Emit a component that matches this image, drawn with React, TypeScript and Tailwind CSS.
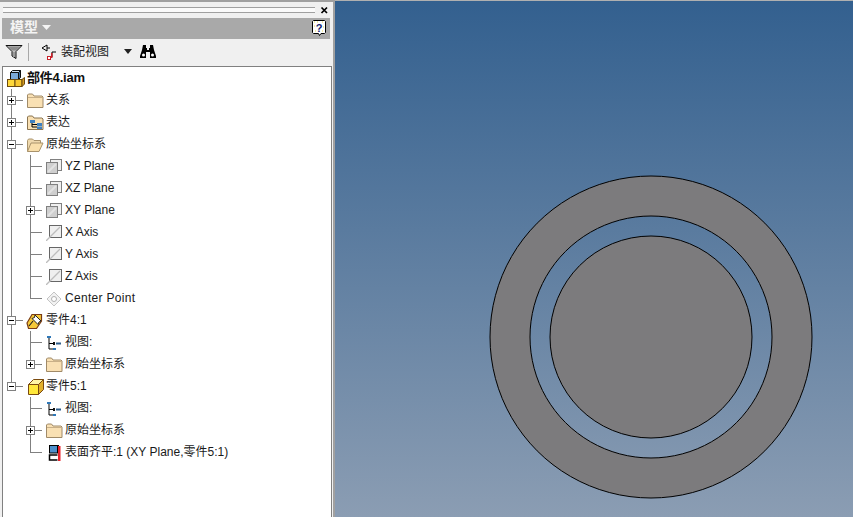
import React from "react";

const cjk = "font-['Liberation_Sans','Noto_Sans_CJK_SC',sans-serif]";

function Box({ t, minus }: { t: number; minus?: boolean }) {
  return (
    <svg width="11" height="11" className="absolute" style={{ left: t, top: 6 }}>
      <rect x="1.500" y="1.500" width="8" height="8" fill="#fff" stroke="#808080" />
      <path d="M3 5.500h5" stroke="#000" />
      {!minus && <path d="M5.500 3v5" stroke="#000" />}
    </svg>
  );
}

function Folder({ open }: { open?: boolean }) {
  return open ? (
    <svg width="18" height="16" viewBox="0 0 18 16">
      <path d="M1.500 14.500V3.500l1-1.500h4l1.500 1.500h6.500v2.500" fill="#efd9ad" stroke="#a9936c" />
      <path d="M1.500 14.500l3.500-8.500h12l-4 8.500z" fill="#f9dfab" stroke="#a9936c" />
    </svg>
  ) : (
    <svg width="18" height="16" viewBox="0 0 18 16">
      <path d="M1.500 14.500V2l1-1h4l1.500 2h8l1 1v10.500z" fill="#f9e0b3" stroke="#a08a68" />
      <path d="M2 4.500h15" stroke="#c9b088" />
    </svg>
  );
}

function RepFolder() {
  return (
    <svg width="18" height="16" viewBox="0 0 18 16">
      <path d="M1.500 14.500V2l1-1h4l1.500 2h8l1 1v10.500z" fill="#f9e0b3" stroke="#8a7450" />
      <path d="M6 7v5h5M6 9.500h5" stroke="#000" fill="none" />
      <rect x="4" y="5" width="5" height="3" fill="#3f80c0" />
      <rect x="11" y="8" width="5" height="3" fill="#3f80c0" />
      <rect x="11" y="11.500" width="5" height="2.500" fill="#3f80c0" />
    </svg>
  );
}

function PlaneIcon() {
  return (
    <svg width="16" height="16" viewBox="0 0 16 16">
      <rect x="4.500" y="0.500" width="11" height="11" fill="#f0f0f0" stroke="#808080" />
      <rect x="0.500" y="3.500" width="11" height="11" fill="#cfcfcf" stroke="#808080" />
      <path d="M2 13L10 5" stroke="#e2e2e2" strokeWidth="2" />
    </svg>
  );
}

function AxisIcon() {
  return (
    <svg width="16" height="16" viewBox="0 0 16 16">
      <rect x="3.500" y="0.500" width="12" height="12" fill="#efefef" stroke="#666" />
      <path d="M0 16L14 2" stroke="#bdbdbd" strokeWidth="1.300" />
    </svg>
  );
}

function PointIcon() {
  return (
    <svg width="16" height="16" viewBox="0 0 16 16">
      <path d="M8 1L15 8L8 15L1 8Z" fill="#f2f2f2" stroke="#c4c4c4" />
      <circle cx="8" cy="8" r="2.500" fill="#fff" stroke="#b0b0b0" />
    </svg>
  );
}

function ViewIcon() {
  return (
    <svg width="16" height="16" viewBox="0 0 16 16">
      <path d="M3 2v12h4M3 8.500h4" stroke="#000" fill="none" />
      <rect x="1" y="1" width="4" height="2" fill="#2f78b8" />
      <rect x="7" y="7" width="2" height="3" fill="#111" />
      <rect x="10" y="7.500" width="5" height="2" fill="#2f5f8c" />
      <rect x="7" y="13" width="3" height="2" fill="#2f78b8" />
    </svg>
  );
}

function MateIcon() {
  return (
    <svg width="13" height="16" viewBox="0 0 13 16">
      <rect x="1.500" y="0.500" width="8" height="7.500" fill="#4d90cc" stroke="#000" />
      <path d="M9.500 10H1.500v5h8" fill="#fff" stroke="#000" strokeWidth="1.500" />
      <path d="M10 0.500h1" stroke="#000" />
      <rect x="10" y="1" width="2.500" height="15" fill="#e8202a" />
    </svg>
  );
}

function PartPin() {
  return (
    <svg width="18" height="18" viewBox="0 0 18 18">
      <path d="M1 11L6 2.500h9.500V9L10.500 16.500H2.500z" fill="#f6c93a" stroke="#7a3c14" strokeWidth="1.200" />
      <path d="M9 3l6 6-2 1-1 2.500-6-6 2.500-1z" fill="#fff" stroke="#222" />
      <path d="M7 9l-4 5" stroke="#222" strokeWidth="1.200" />
    </svg>
  );
}

function PartCube() {
  return (
    <svg width="17" height="17" viewBox="0 0 17 17">
      <path d="M1.500 6.500h10v10h-10z" fill="#ffe83a" stroke="#7a4a10" />
      <path d="M1.500 6.500L6.500 1.500h10l-5 5z" fill="#fff5a5" stroke="#7a4a10" />
      <path d="M11.500 6.500l5-5v10l-5 5z" fill="#e2b02a" stroke="#7a4a10" />
    </svg>
  );
}

function AssemblyIcon() {
  return (
    <svg width="18" height="17" viewBox="0 0 18 17">
      <rect x="3.500" y="2.500" width="8" height="7" fill="#7ba9d8" stroke="#111" />
      <path d="M3.500 2.500l2-2h8l-2 2z" fill="#cfe1f3" stroke="#111" />
      <path d="M11.500 2.500l2-2v7l-2 2z" fill="#3a6a9c" stroke="#111" />
      <rect x="0.500" y="9.500" width="7.500" height="7" fill="#ffd83a" stroke="#6b4a10" />
      <rect x="8" y="9.500" width="7" height="7" fill="#f8c830" stroke="#6b4a10" />
      <path d="M15 9.500l2.500-2v6.500L15 16.500z" fill="#d69c20" stroke="#6b4a10" />
    </svg>
  );
}

type Row = { level: 0 | 1; icon: React.ReactNode; label: string; box?: "plus" | "minus"; wide?: boolean };

const rows: Row[] = [
  { level: 0, box: "plus", icon: <Folder />, label: "关系" },
  { level: 0, box: "plus", icon: <RepFolder />, label: "表达" },
  { level: 0, box: "minus", icon: <Folder open />, label: "原始坐标系" },
  { level: 1, icon: <PlaneIcon />, label: "YZ Plane" },
  { level: 1, icon: <PlaneIcon />, label: "XZ Plane" },
  { level: 1, box: "plus", icon: <PlaneIcon />, label: "XY Plane" },
  { level: 1, icon: <AxisIcon />, label: "X Axis" },
  { level: 1, icon: <AxisIcon />, label: "Y Axis" },
  { level: 1, icon: <AxisIcon />, label: "Z Axis" },
  { level: 1, icon: <PointIcon />, label: "Center Point", wide: true },
  { level: 0, box: "minus", icon: <PartPin />, label: "零件4:1" },
  { level: 1, icon: <ViewIcon />, label: "视图:" },
  { level: 1, box: "plus", icon: <Folder />, label: "原始坐标系" },
  { level: 0, box: "minus", icon: <PartCube />, label: "零件5:1" },
  { level: 1, icon: <ViewIcon />, label: "视图:" },
  { level: 1, box: "plus", icon: <Folder />, label: "原始坐标系" },
  { level: 1, icon: <MateIcon />, label: "表面齐平:1 (XY Plane,零件5:1)" },
];

function TreeRow({ row, index }: { row: Row; index: number }) {
  const x = row.level === 0 ? 8 : 27;
  const iconLeft = row.level === 0 ? 23 : 42;
  const lastOfLevel1 = index === 9 || index === 12 || index === 16;
  return (
    <div className="relative h-[22px]">
      {index < 13 && <div className="absolute left-[8px] top-0 bottom-0 w-px bg-[#808080]" />}
      {index === 13 && <div className="absolute left-[8px] top-0 h-[11px] w-px bg-[#808080]" />}
      {row.level === 1 && (
        <div
          className={
            lastOfLevel1
              ? "absolute left-[27px] top-0 h-[11px] w-px bg-[#808080]"
              : "absolute left-[27px] top-0 bottom-0 w-px bg-[#808080]"
          }
        />
      )}
      <div className="absolute top-[11px] h-px w-[12px] bg-[#808080]" style={{ left: x }} />
      {row.box && <Box t={x - 5} minus={row.box === "minus"} />}
      <div className="absolute top-[3px] flex h-[17px] w-[18px] items-center justify-center" style={{ left: iconLeft }}>
        {row.icon}
      </div>
      <span
        className={`absolute top-[3px] whitespace-nowrap text-[12px] leading-[17px] text-[#1a1a1a] ${row.wide ? "tracking-[0.3px]" : ""} ${cjk}`}
        style={{ left: iconLeft + 20 }}
      >
        {row.label}
      </span>
    </div>
  );
}

export default function App() {
  return (
    <div className="flex h-[517px] w-[853px] overflow-hidden bg-[#f0f0f0]">
      <div className="flex h-full w-[335px] shrink-0 flex-col border-r-2 border-t-2 border-[#a0a0a0] bg-[#f0f0f0]">
        <div className="flex h-[16px] shrink-0 items-center pl-[3px] pr-[4px]">
          <div className="h-[6px] flex-1 border-y border-[#a0a0a0] bg-[#fafafa]" />
          <svg width="9" height="9" viewBox="0 0 9 9" className="ml-[5px]">
            <path d="M1.500 1.500l5.500 5.500M7 1.500L1.500 7" stroke="#000" strokeWidth="1.700" />
          </svg>
        </div>
        <div className="ml-[2px] mr-[3px] flex h-[21px] shrink-0 items-center bg-[#a9a9a9] pb-[2px] pl-[8px] pr-[4px]">
          <span className={`text-[14px] font-semibold text-[#f4f4f4] ${cjk}`}>模型</span>
          <svg width="9" height="5" className="ml-[4px]">
            <path d="M0 0h9L4.500 5z" fill="#f4f4f4" />
          </svg>
          <svg width="14" height="16" viewBox="0 0 14 16" className="ml-auto">
            <path d="M1.500 0.500h11l1 1v11l-1 1H9l-1.500 2-1-2h-5l-1-1v-11z" fill="#fff" stroke="#000" />
            <path d="M2 2h1M5 2h1M10 2h1M2 6h1M11 7h1M3 11h1M10 11h1" stroke="#e6d84a" />
            <text x="7" y="11.500" textAnchor="middle" fontSize="11" fontWeight="700" fill="#111a70" fontFamily="'Liberation Sans',sans-serif">?</text>
          </svg>
        </div>
        <div className="flex h-[27px] shrink-0 items-center pb-[2px] pl-[5px]">
          <svg width="18" height="16" viewBox="0 0 18 16">
            <path d="M1 1.500h16L11 7.500V14.500L7 12V7.500z" fill="#c2c2c2" stroke="#111" />
            <path d="M3 2.500h12l-4 4H7z" fill="#8c8c8c" />
            <path d="M8 8h2v5h-2z" fill="#9a9a9a" />
          </svg>
          <div className="ml-[5px] h-[18px] w-px bg-[#a8a8a8]" />
          <svg width="16" height="16" viewBox="0 0 16 16" className="ml-[12px]">
            <path d="M6 1v6L1 4zM6 4h3" fill="none" stroke="#000" />
            <path d="M11 8h4M11 8v5" stroke="#000" fill="none" />
            <rect x="10" y="9" width="1.500" height="5" fill="#d0202a" />
            <rect x="6.500" y="12.500" width="3" height="3" fill="#fff" stroke="#c8202a" />
          </svg>
          <span className={`ml-[4px] text-[12px] text-[#222] ${cjk}`}>装配视图</span>
          <svg width="8" height="5" className="ml-[15px]">
            <path d="M0 0h8L4 5z" fill="#222" />
          </svg>
          <svg width="16" height="14" viewBox="0 0 16 14" className="ml-[8px]">
            <path d="M3 0h3v3h1v2h2V3h1V0h3l1 5 2 6v2h-6V7H6v6H0v-2l2-6z" fill="#000" />
            <circle cx="3.500" cy="10" r="1.500" fill="#fff" />
            <circle cx="12.500" cy="10" r="1.500" fill="#fff" />
          </svg>
        </div>
        <div className="ml-[2px] mr-[1px] flex-1 border-x border-t border-[#808080] bg-white">
          <div className="relative h-[22px]">
            <div className="absolute left-[4px] top-[3px]">
              <AssemblyIcon />
            </div>
            <span className={`absolute left-[24px] top-[2px] whitespace-nowrap text-[13px] font-bold leading-[17px] tracking-[-0.2px] text-[#111] ${cjk}`}>
              部件4.iam
            </span>
          </div>
          {rows.map((row, i) => (
            <TreeRow key={i} row={row} index={i} />
          ))}
        </div>
      </div>
      <div className="relative h-full flex-1 border-t border-[#b0b0b0] bg-[linear-gradient(to_bottom,#33608f,#8b9db3)]">
        <svg width="518" height="516" className="absolute inset-0">
          <path
            fillRule="evenodd"
            d="M316 175a161 161 0 1 0 0.010 0zM316 215a121 121 0 1 0 0.010 0z"
            fill="#7c7b7d"
            stroke="#000"
          />
          <circle cx="316" cy="336" r="101" fill="#7c7b7d" stroke="#000" />
        </svg>
      </div>
    </div>
  );
}
